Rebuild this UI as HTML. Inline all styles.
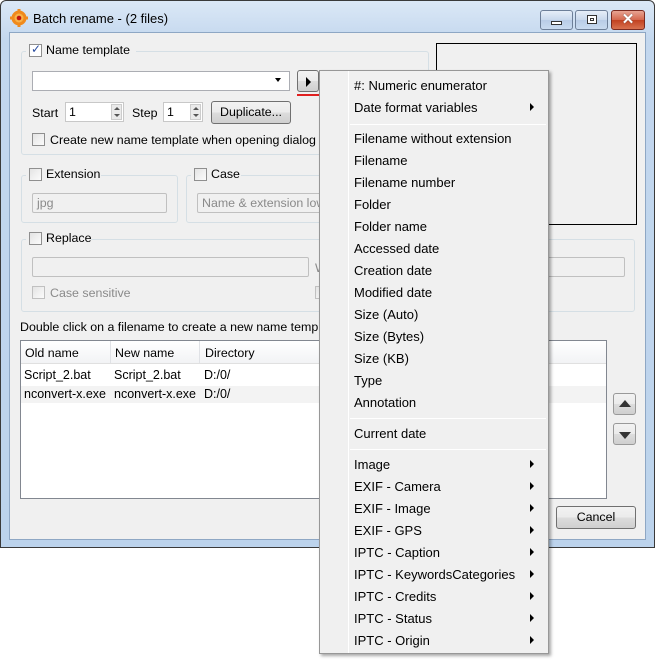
<!DOCTYPE html>
<html><head><meta charset="utf-8"><style>
*{box-sizing:border-box;margin:0;padding:0}
body{width:655px;height:661px;background:#fff;position:relative;overflow:hidden;font-family:"Liberation Sans",sans-serif;font-size:12.4px;color:#000}
.a{position:absolute}
.win{left:0;top:0;width:655px;height:548px;border:1px solid #3a3a3a;border-radius:6px 6px 0 0;background:linear-gradient(#dbe8f6,#c3d7ee 40px,#bcd3ec);}
.client{left:9px;top:32px;width:637px;height:508px;background:#f0f0f0;border:1px solid #8ea7c4}
.grp{border:1px solid #d5dfe5;border-radius:3px}
.cb{width:13px;height:13px;border:1px solid #8f8f8f;background:linear-gradient(135deg,#e4e4e4,#fbfbfb)}
.txt{background:#fff;border:1px solid #abadb3}
.dis{border:1px solid #c0c0c0;background:#f0f0f0;color:#8a8a8a;border-radius:2px;padding:2px 4px}
.btn{border:1px solid #707070;border-radius:3px;background:linear-gradient(#f2f2f2,#ebebeb 50%,#dddddd 50%,#cfcfcf);text-align:center}
.menu{left:319px;top:70px;width:230px;height:584px;background:#f0f0f0;border:1px solid #979797;box-shadow:2px 2px 3px rgba(0,0,0,.35)}
.mi{position:absolute;left:34px;font-size:13px;line-height:14px}
.arr{position:absolute;left:210px;width:0;height:0;border-left:4px solid #000;border-top:4px solid transparent;border-bottom:4px solid transparent}
.sep{position:absolute;left:30px;width:196px;height:1px;background:#e0e0e0;border-bottom:1px solid #fff}
.wb{top:10px;height:20px;border:1px solid #6d7f98;border-radius:3px;background:linear-gradient(#e6eef8,#c8d8ec 50%,#b8cce6 50%,#c9dbef)}
.sp{position:absolute;width:11px;height:16px;background:#eaeaea;border:1px solid #ccc}
.sp:before{content:"";position:absolute;left:2px;top:2px;border-bottom:3px solid #555;border-left:3px solid transparent;border-right:3px solid transparent}
.sp:after{content:"";position:absolute;left:2px;top:9px;border-top:3px solid #555;border-left:3px solid transparent;border-right:3px solid transparent}
</style></head><body>
<div class="a win"></div>
<svg class="a" style="left:10px;top:9px" width="18" height="18" viewBox="0 0 18 18"><circle cx="9" cy="9" r="7.5" fill="#f08a1c"/><g fill="#f08a1c"><rect x="7.5" y="0" width="3" height="18"/><rect x="0" y="7.5" width="18" height="3"/></g><circle cx="9" cy="9" r="4.5" fill="#f7b24a"/><circle cx="9" cy="9" r="2.3" fill="#c0150f"/></svg>
<div class="a" style="left:33px;top:11px;font-size:13px">Batch rename - (2 files)</div>
<div class="a wb" style="left:540px;width:33px"><div class="a" style="left:10px;top:10px;width:11px;height:4px;background:#fff;border:1px solid #333"></div></div>
<div class="a wb" style="left:575px;width:33px"><div class="a" style="left:11px;top:4px;width:10px;height:9px;background:#fff;border:1px solid #333"><div class="a" style="left:2px;top:2px;width:4px;height:3px;border:1px solid #333"></div></div></div>
<div class="a wb" style="left:611px;width:34px;border-color:#7a2a20;background:linear-gradient(#e8a493,#d4674d 50%,#c1401f 50%,#d8714f)"><div class="a" style="left:0;top:0;width:32px;text-align:center;color:#fff;font-weight:bold;font-size:15px;line-height:18px;text-shadow:0 0 1px #333">✕</div></div>
<div class="a client"></div>

<div class="a grp" style="left:21px;top:51px;width:408px;height:104px"></div>
<div class="a" style="left:26px;top:43px;width:110px;height:14px;background:#f0f0f0"></div>
<div class="a cb" style="left:29px;top:44px;background:#fff"><span class="a" style="left:1px;top:-3px;color:#2a4da0;font-size:12px">✓</span></div>
<div class="a" style="left:46px;top:43px">Name template</div>
<div class="a txt" style="left:32px;top:71px;width:258px;height:20px"><span class="a" style="left:242px;top:6px;border-top:4px solid #000;border-left:3px solid transparent;border-right:3px solid transparent"></span></div>
<div class="a btn" style="left:297px;top:70px;width:22px;height:22px"><span class="a" style="left:8px;top:6px;border-left:5px solid #000;border-top:5px solid transparent;border-bottom:5px solid transparent"></span></div>
<div class="a" style="left:297px;top:94px;width:24px;height:2px;background:#e02020"></div>
<div class="a" style="left:32px;top:106px">Start</div>
<div class="a txt" style="left:65px;top:102px;width:59px;height:20px;border-color:#c8c8c8"><span class="a" style="left:3px;top:2px">1</span><div class="sp" style="left:45px;top:1px"></div></div>
<div class="a" style="left:132px;top:106px">Step</div>
<div class="a txt" style="left:163px;top:102px;width:40px;height:20px;border-color:#c8c8c8"><span class="a" style="left:3px;top:2px">1</span><div class="sp" style="left:26px;top:1px"></div></div>
<div class="a btn" style="left:211px;top:101px;width:80px;height:23px;line-height:21px">Duplicate...</div>
<div class="a cb" style="left:32px;top:133px"></div>
<div class="a" style="left:50px;top:133px">Create new name template when opening dialog</div>

<div class="a" style="left:436px;top:43px;width:201px;height:182px;border:1px solid #000"></div>

<div class="a grp" style="left:21px;top:175px;width:157px;height:48px"></div>
<div class="a" style="left:26px;top:167px;width:75px;height:14px;background:#f0f0f0"></div>
<div class="a cb" style="left:29px;top:168px"></div>
<div class="a" style="left:46px;top:167px">Extension</div>
<div class="a dis" style="left:32px;top:193px;width:135px;height:20px">jpg</div>
<div class="a grp" style="left:186px;top:175px;width:150px;height:48px"></div>
<div class="a" style="left:191px;top:167px;width:50px;height:14px;background:#f0f0f0"></div>
<div class="a cb" style="left:194px;top:168px"></div>
<div class="a" style="left:211px;top:167px">Case</div>
<div class="a dis" style="left:197px;top:193px;width:130px;height:20px;white-space:nowrap;overflow:hidden">Name &amp; extension lowe</div>
<div class="a grp" style="left:21px;top:239px;width:614px;height:73px"></div>
<div class="a" style="left:26px;top:231px;width:65px;height:14px;background:#f0f0f0"></div>
<div class="a cb" style="left:29px;top:232px"></div>
<div class="a" style="left:46px;top:231px">Replace</div>
<div class="a dis" style="left:32px;top:257px;width:277px;height:20px"></div>
<div class="a" style="left:315px;top:261px;color:#8a8a8a">W</div>
<div class="a dis" style="left:540px;top:257px;width:85px;height:20px"></div>
<div class="a cb" style="left:32px;top:286px;border-color:#c0c0c0"></div>
<div class="a" style="left:50px;top:286px;color:#8a8a8a">Case sensitive</div>
<div class="a cb" style="left:315px;top:286px;border-color:#c0c0c0"></div>

<div class="a" style="left:20px;top:320px">Double click on a filename to create a new name template</div>
<div class="a" style="left:20px;top:340px;width:587px;height:159px;border:1px solid #828790;background:#fff"></div>
<div class="a" style="left:21px;top:341px;width:585px;height:23px;background:linear-gradient(#fff,#f2f3f5);border-bottom:1px solid #e0e0e0"></div>
<div class="a" style="left:110px;top:341px;width:1px;height:22px;background:#e0e2e6"></div>
<div class="a" style="left:199px;top:341px;width:1px;height:22px;background:#e0e2e6"></div>
<div class="a" style="left:25px;top:346px">Old name</div>
<div class="a" style="left:115px;top:346px">New name</div>
<div class="a" style="left:205px;top:346px">Directory</div>
<div class="a" style="left:21px;top:386px;width:585px;height:17px;background:#f3f3f3"></div>
<div class="a" style="left:24px;top:368px;font-size:12.5px">Script_2.bat</div>
<div class="a" style="left:114px;top:368px;font-size:12.5px">Script_2.bat</div>
<div class="a" style="left:204px;top:368px;font-size:12.5px">D:/0/</div>
<div class="a" style="left:24px;top:387px;font-size:12.5px">nconvert-x.exe</div>
<div class="a" style="left:114px;top:387px;font-size:12.5px">nconvert-x.exe</div>
<div class="a" style="left:204px;top:387px;font-size:12.5px">D:/0/</div>

<div class="a btn" style="left:613px;top:393px;width:23px;height:22px;border-color:#999"><span class="a" style="left:5px;top:6px;border-bottom:7px solid #333;border-left:6px solid transparent;border-right:6px solid transparent"></span></div>
<div class="a btn" style="left:613px;top:423px;width:23px;height:22px;border-color:#999"><span class="a" style="left:5px;top:8px;border-top:7px solid #333;border-left:6px solid transparent;border-right:6px solid transparent"></span></div>
<div class="a btn" style="left:556px;top:506px;width:80px;height:23px;line-height:21px">Cancel</div>

<div class="a menu">
<div class="a" style="left:28px;top:0;width:1px;height:582px;background:#e2e3e3;border-right:1px solid #fff"></div>
<div class="mi" style="top:8px">#: Numeric enumerator</div>
<div class="mi" style="top:30px">Date format variables</div><div class="arr" style="top:32px"></div>
<div class="sep" style="top:53px"></div>
<div class="mi" style="top:61px">Filename without extension</div>
<div class="mi" style="top:83px">Filename</div>
<div class="mi" style="top:105px">Filename number</div>
<div class="mi" style="top:127px">Folder</div>
<div class="mi" style="top:149px">Folder name</div>
<div class="mi" style="top:171px">Accessed date</div>
<div class="mi" style="top:193px">Creation date</div>
<div class="mi" style="top:215px">Modified date</div>
<div class="mi" style="top:237px">Size (Auto)</div>
<div class="mi" style="top:259px">Size (Bytes)</div>
<div class="mi" style="top:281px">Size (KB)</div>
<div class="mi" style="top:303px">Type</div>
<div class="mi" style="top:325px">Annotation</div>
<div class="sep" style="top:347px"></div>
<div class="mi" style="top:356px">Current date</div>
<div class="sep" style="top:378px"></div>
<div class="mi" style="top:387px">Image</div><div class="arr" style="top:389px"></div>
<div class="mi" style="top:409px">EXIF - Camera</div><div class="arr" style="top:411px"></div>
<div class="mi" style="top:431px">EXIF - Image</div><div class="arr" style="top:433px"></div>
<div class="mi" style="top:453px">EXIF - GPS</div><div class="arr" style="top:455px"></div>
<div class="mi" style="top:475px">IPTC - Caption</div><div class="arr" style="top:477px"></div>
<div class="mi" style="top:497px">IPTC - KeywordsCategories</div><div class="arr" style="top:499px"></div>
<div class="mi" style="top:519px">IPTC - Credits</div><div class="arr" style="top:521px"></div>
<div class="mi" style="top:541px">IPTC - Status</div><div class="arr" style="top:543px"></div>
<div class="mi" style="top:563px">IPTC - Origin</div><div class="arr" style="top:565px"></div>
</div>
</body></html>
